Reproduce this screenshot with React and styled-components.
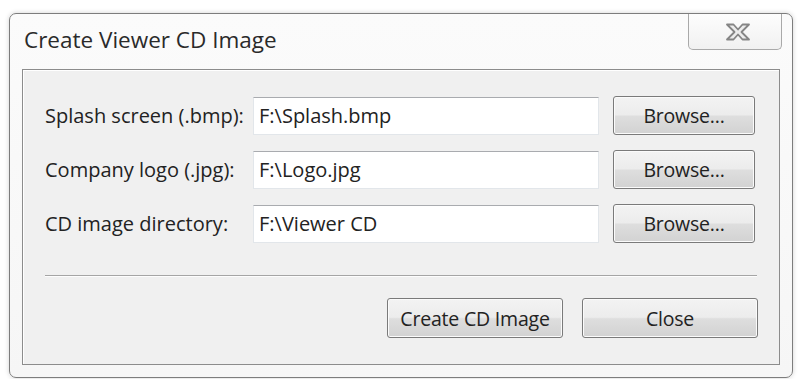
import React from 'react';
import styled, { createGlobalStyle } from 'styled-components';

const GlobalStyle = createGlobalStyle`
  html, body {
    margin: 0;
    padding: 0;
    background: #ffffff;
  }
  body {
    font-family: 'Open Sans', 'Liberation Sans', sans-serif;
    color: #1e1e1e;
  }
`;

const Page = styled.div`
  padding: 13px 10px 1px 9px;
`;

const Window = styled.div`
  width: 784px;
  height: 365px;
  box-sizing: border-box;
  border: 1px solid #7d7d7d;
  border-radius: 7px;
  background: linear-gradient(180deg, #fbfbfb 0%, #f6f6f6 100%);
  box-shadow: 0 0 5px rgba(0, 0, 0, 0.18);
  display: flex;
  flex-direction: column;
  padding: 0 12px 12px 12px;
`;

const TitleBar = styled.div`
  height: 55px;
  display: flex;
  justify-content: space-between;
  align-items: flex-start;
`;

const Title = styled.div`
  font-family: 'Open Sans', sans-serif;
  font-size: 22.5px;
  line-height: 1;
  padding: 15px 0 0 2px;
  color: #2a2a2a;
`;

const CloseBox = styled.div`
  width: 94px;
  height: 36px;
  margin-right: -2px;
  box-sizing: border-box;
  border: 1px solid #a9a9a9;
  border-top: none;
  border-radius: 0 0 5px 5px;
  background: linear-gradient(180deg, #fdfdfd, #f1f1f1);
  display: flex;
  align-items: center;
  justify-content: center;
  padding-left: 6px;
`;

const Panel = styled.div`
  flex: 1;
  box-sizing: border-box;
  border: 1px solid #8c8c8c;
  box-shadow: inset 1px 1px 0 #ffffff;
  background: #f0f0f0;
  padding: 26px 24px 0 22px;
  display: flex;
  flex-direction: column;
`;

const Rows = styled.div`
  display: flex;
  flex-direction: column;
  gap: 15px;
`;

const Row = styled.div`
  display: grid;
  grid-template-columns: 194px 346px 142px;
  column-gap: 14px;
  align-items: center;
  height: 39px;
`;

const Label = styled.span`
  font-size: 20px;
  color: #222;
  white-space: nowrap;
`;

const Field = styled.div`
  height: 38px;
  box-sizing: border-box;
  background: #ffffff;
  border: 1px solid #e2e6ea;
  border-top-color: #a9abaf;
  padding: 0 5px;
  display: flex;
  align-items: center;
  font-size: 20px;
  color: #222;
`;

const Button = styled.div`
  width: ${(p) => p.w || 142}px;
  height: ${(p) => p.h || 39}px;
  box-sizing: border-box;
  border: 1px solid #7a7a7a;
  border-radius: 3px;
  box-shadow: inset 0 0 0 1px #fbfbfb;
  background: linear-gradient(180deg, #f3f3f3 0%, #ececec 48%, #dedede 52%, #d2d2d2 100%);
  display: flex;
  align-items: center;
  justify-content: center;
  font-size: 19.5px;
  letter-spacing: -0.2px;
  color: #222;
`;

const Separator = styled.div`
  margin: 32px -2px 0 0;
  height: 1px;
  background: #a5a5a5;
  border-bottom: 1px solid #fdfdfd;
`;

const Footer = styled.div`
  display: flex;
  justify-content: flex-end;
  gap: 19px;
  margin: 21px -3px 0 0;
`;

function CloseGlyph() {
  return (
    <svg width="26" height="18" viewBox="0 0 26 18">
      <path
        d="M2 1.5 H8.5 L13 6.5 L17.5 1.5 H24 L16.5 9 L24 16.5 H17.5 L13 11.5 L8.5 16.5 H2 L9.5 9 Z"
        fill="#ececec"
        stroke="#858585"
        strokeWidth="1.8"
        strokeLinejoin="round"
      />
    </svg>
  );
}

const rows = [
  { label: 'Splash screen (.bmp):', value: 'F:\\Splash.bmp' },
  { label: 'Company logo (.jpg):', value: 'F:\\Logo.jpg' },
  { label: 'CD image directory:', value: 'F:\\Viewer CD' },
];

export default function App() {
  return (
    <Page>
      <GlobalStyle />
      <Window>
        <TitleBar>
          <Title>Create Viewer CD Image</Title>
          <CloseBox>
            <CloseGlyph />
          </CloseBox>
        </TitleBar>
        <Panel>
          <Rows>
            {rows.map((r) => (
              <Row key={r.label}>
                <Label>{r.label}</Label>
                <Field>{r.value}</Field>
                <Button>Browse...</Button>
              </Row>
            ))}
          </Rows>
          <Separator />
          <Footer>
            <Button w={176} h={40}>Create CD Image</Button>
            <Button w={176} h={40}>Close</Button>
          </Footer>
        </Panel>
      </Window>
    </Page>
  );
}
